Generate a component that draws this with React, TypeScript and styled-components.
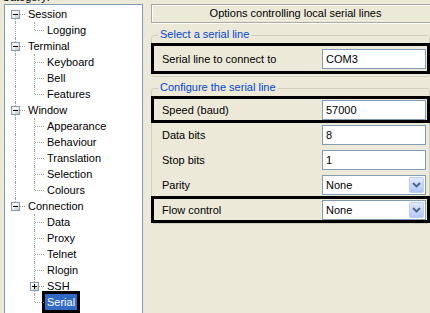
import React from 'react';
import styled, { createGlobalStyle, css } from 'styled-components';

const GlobalStyle = createGlobalStyle`
  html, body {
    margin: 0;
    padding: 0;
    background: #ece9d8;
  }
  body {
    font-family: 'Liberation Sans', Arial, sans-serif;
    font-size: 11px;
    color: #000;
  }
`;

const Dialog = styled.div`
  width: 430px;
  height: 313px;
  overflow: hidden;
  display: flex;
  background: #ece9d8;
`;

const Sidebar = styled.div`
  width: 143px;
  flex: none;
  display: flex;
  flex-direction: column;
`;

const CategoryLabel = styled.div`
  height: 4px;
  overflow: hidden;
  display: flex;
  align-items: flex-end;
  padding-left: 2px;
  line-height: 13px;
`;

const TreeBox = styled.div`
  flex: 1;
  margin-left: 4px;
  background: #fff;
  border: 1px solid #7f9db9;
  border-bottom: none;
  padding: 1px 0 0 1px;
`;

const TreeRow = styled.div`
  display: flex;
  height: 16px;
`;

const lineColor = '#a0a0a0';

const Guide = styled.div<{ $line: boolean }>`
  width: 19px;
  flex: none;
  position: relative;
  ${(p) =>
    p.$line &&
    css`
      &::before {
        content: '';
        position: absolute;
        left: 9px;
        top: 0;
        bottom: 0;
        border-left: 1px dotted ${lineColor};
      }
    `}
`;

const Branch = styled.div<{ $up: boolean; $down: boolean }>`
  width: 19px;
  flex: none;
  position: relative;
  &::before {
    content: '';
    position: absolute;
    left: 9px;
    top: ${(p) => (p.$up ? '0' : '8px')};
    bottom: ${(p) => (p.$down ? '0' : '8px')};
    border-left: 1px dotted ${lineColor};
  }
  &::after {
    content: '';
    position: absolute;
    left: 10px;
    right: 0;
    top: 8px;
    border-top: 1px dotted ${lineColor};
  }
`;

const Expander = styled.div<{ $open: boolean }>`
  position: absolute;
  left: 5px;
  top: 4px;
  width: 9px;
  height: 9px;
  box-sizing: border-box;
  z-index: 1;
  border: 1px solid #7f9db9;
  background: linear-gradient(135deg, #ffffff 0%, #f0efe8 50%, #c8c5b6 100%);
  &::before {
    content: '';
    position: absolute;
    left: 1px;
    top: 3px;
    width: 5px;
    height: 1px;
    background: #000;
  }
  ${(p) =>
    !p.$open &&
    css`
      &::after {
        content: '';
        position: absolute;
        left: 3px;
        top: 1px;
        width: 1px;
        height: 5px;
        background: #000;
      }
    `}
`;

const TreeLabel = styled.span<{ $selected?: boolean; $marked?: boolean }>`
  margin-left: 1px;
  padding: 0 2px;
  height: 16px;
  line-height: 16px;
  white-space: nowrap;
  background: ${(p) => (p.$selected ? '#316ac5' : 'transparent')};
  color: ${(p) => (p.$selected ? '#fff' : '#000')};
  outline: ${(p) => (p.$marked ? '3px solid #000' : 'none')};
`;

const Panel = styled.div`
  flex: 1;
  display: flex;
  flex-direction: column;
  padding: 4px 0 0 8px;
  min-width: 0;
`;

const PanelTitle = styled.div`
  width: 289px;
  height: 19px;
  flex: none;
  box-sizing: border-box;
  border: 1px solid #aca899;
  box-shadow: inset 1px 1px 0 #fff, 1px 1px 0 #fff;
  text-align: center;
  line-height: 17px;
  white-space: nowrap;
`;

const GroupBox = styled.div<{ $gap: number }>`
  position: relative;
  flex: none;
  width: 279px;
  box-sizing: border-box;
  margin-top: ${(p) => p.$gap}px;
  border: 1px solid #d0d0bf;
  border-radius: 3px;
  padding: 8px 0 ${(p) => (p.$gap === 12 ? 3 : 1)}px;
`;

const Legend = styled.span`
  position: absolute;
  left: 6px;
  top: -8px;
  padding: 0 2px;
  line-height: 13px;
  background: #ece9d8;
  color: #0046d5;
  white-space: nowrap;
`;

const FieldRow = styled.div<{ $height: number; $marked?: boolean }>`
  display: flex;
  align-items: center;
  justify-content: space-between;
  height: ${(p) => p.$height}px;
  padding: 0 3px 0 10px;
  outline: ${(p) => (p.$marked ? '3px solid #000' : 'none')};
  outline-offset: -2px;
`;

const TextField = styled.input`
  width: 104px;
  height: 20px;
  box-sizing: border-box;
  border: 1px solid #7f9db9;
  background: #fff;
  padding: 0 3px;
  margin: 0;
  font: inherit;
  color: #000;
  outline: none;
`;

const ComboBox = styled.div`
  width: 104px;
  height: 20px;
  box-sizing: border-box;
  border: 1px solid #7f9db9;
  background: #fff;
  padding: 1px;
  display: flex;
  align-items: stretch;
`;

const ComboValue = styled.span`
  flex: 1;
  padding-left: 2px;
  line-height: 16px;
`;

const ComboButton = styled.span`
  width: 15px;
  flex: none;
  box-sizing: border-box;
  border: 1px solid #bacef8;
  border-radius: 2px;
  background: linear-gradient(180deg, #e2ebfd 0%, #c9d7fb 50%, #b2c6f6 100%);
  display: flex;
  align-items: center;
  justify-content: center;
`;

type TreeNode = {
  label: string;
  children?: TreeNode[];
  open?: boolean;
  selected?: boolean;
  marked?: boolean;
};

const leaf = (label: string): TreeNode => ({ label });

const tree: TreeNode[] = [
  { label: 'Session', open: true, children: [leaf('Logging')] },
  {
    label: 'Terminal',
    open: true,
    children: ['Keyboard', 'Bell', 'Features'].map(leaf),
  },
  {
    label: 'Window',
    open: true,
    children: ['Appearance', 'Behaviour', 'Translation', 'Selection', 'Colours'].map(leaf),
  },
  {
    label: 'Connection',
    open: true,
    children: [
      ...['Data', 'Proxy', 'Telnet', 'Rlogin'].map(leaf),
      { label: 'SSH', open: false, children: ['Kex', 'Auth', 'TTY', 'X11', 'Tunnels', 'Bugs'].map(leaf) },
      { label: 'Serial', selected: true, marked: true },
    ],
  },
];

type FlatRow = { node: TreeNode; guides: boolean[]; first: boolean; last: boolean };

function flatten(nodes: TreeNode[], guides: boolean[], out: FlatRow[], root: boolean) {
  nodes.forEach((node, i) => {
    const last = i === nodes.length - 1;
    out.push({ node, guides, first: root && i === 0, last });
    if (node.open && node.children) flatten(node.children, [...guides, !last], out, false);
  });
  return out;
}

const rows = flatten(tree, [], [], true);

const Chevron = () => (
  <svg width="9" height="6" viewBox="0 0 9 6">
    <path d="M1 1 L4.5 4.5 L8 1" fill="none" stroke="#4d6185" strokeWidth="1.8" />
  </svg>
);

const Combo = ({ value }: { value: string }) => (
  <ComboBox>
    <ComboValue>{value}</ComboValue>
    <ComboButton>
      <Chevron />
    </ComboButton>
  </ComboBox>
);

export default function App() {
  return (
    <>
      <GlobalStyle />
      <Dialog>
        <Sidebar>
          <CategoryLabel>Category:</CategoryLabel>
          <TreeBox>
            {rows.map((row, idx) => (
              <TreeRow key={idx}>
                {row.guides.map((g, i) => (
                  <Guide key={i} $line={g} />
                ))}
                <Branch $up={!row.first} $down={!row.last}>
                  {row.node.children && <Expander $open={!!row.node.open} />}
                </Branch>
                <TreeLabel $selected={row.node.selected} $marked={row.node.marked}>
                  {row.node.label}
                </TreeLabel>
              </TreeRow>
            ))}
          </TreeBox>
        </Sidebar>
        <Panel>
          <PanelTitle>Options controlling local serial lines</PanelTitle>
          <GroupBox $gap={12}>
            <Legend>Select a serial line</Legend>
            <FieldRow $height={29} $marked>
              <span>Serial line to connect to</span>
              <TextField readOnly value="COM3" />
            </FieldRow>
          </GroupBox>
          <GroupBox $gap={11}>
            <Legend>Configure the serial line</Legend>
            <FieldRow $height={25} $marked>
              <span>Speed (baud)</span>
              <TextField readOnly value="57000" />
            </FieldRow>
            <FieldRow $height={25}>
              <span>Data bits</span>
              <TextField readOnly value="8" />
            </FieldRow>
            <FieldRow $height={25}>
              <span>Stop bits</span>
              <TextField readOnly value="1" />
            </FieldRow>
            <FieldRow $height={25}>
              <span>Parity</span>
              <Combo value="None" />
            </FieldRow>
            <FieldRow $height={25} $marked>
              <span>Flow control</span>
              <Combo value="None" />
            </FieldRow>
          </GroupBox>
        </Panel>
      </Dialog>
    </>
  );
}
